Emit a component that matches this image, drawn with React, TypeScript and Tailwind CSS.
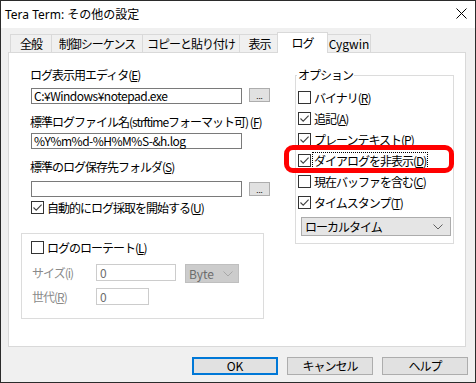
import React from "react";

const Check = ({ checked }: { checked?: boolean }) => (
  <span className="w-[13px] h-[13px] border border-[#333333] bg-white flex items-center justify-center shrink-0">
    {checked && (
      <svg width="11" height="11" viewBox="0 0 11 11">
        <path d="M1.5 5.5 L4.2 8.2 L9.6 2.6" fill="none" stroke="#404040" strokeWidth="1.1" />
      </svg>
    )}
  </span>
);

const Chevron = ({ color }: { color: string }) => (
  <svg width="10" height="6" viewBox="0 0 10 6">
    <path d="M0.5 0.5 L5 5 L9.5 0.5" fill="none" stroke={color} strokeWidth="1" />
  </svg>
);

const Dots = () => (
  <div className="ml-[7px] w-[21px] h-[14px] bg-[#e1e1e1] border border-[#adadad] flex items-end justify-center text-[8px] leading-[10px] tracking-normal">
    ...
  </div>
);

const Option = ({ checked, children, focus }: { checked?: boolean; children: React.ReactNode; focus?: boolean }) => (
  <div className="h-[21px] flex items-center ml-[2px] gap-[2px]">
    <Check checked={checked} />
    <span className={focus ? "outline-1 outline-dotted outline-[#000] px-[1px] leading-[15px]" : "px-[1px] leading-[15px]"}>{children}</span>
  </div>
);

export default function App() {
  return (
    <div className="w-[476px] h-[383px] border border-[#2b2b2b] bg-[#f0f0f0] flex flex-col text-[12px] tracking-[-1px] text-black font-['Noto_Sans_CJK_JP',sans-serif]">
      {/* タイトルバー */}
      <div className="h-[27px] bg-white flex items-center justify-between shrink-0">
        <span className="pl-[4px] tracking-normal font-['Noto_Sans','Noto_Sans_CJK_JP',sans-serif]">Tera Term: その他の設定</span>
        <svg width="11" height="11" viewBox="0 0 11 11" className="mr-[8px] -mt-[2px]">
          <path d="M0.5 0.5 L10.5 10.5 M10.5 0.5 L0.5 10.5" stroke="#000" strokeWidth="1" />
        </svg>
      </div>

      {/* タブ */}
      <div className="mt-[4px] h-[20px] flex items-end pl-[9px]">
        <div className="w-[42px] h-[18px] border border-b-0 border-[#d9d9d9] flex items-center justify-center">全般</div>
        <div className="-ml-px w-[92px] h-[18px] border border-b-0 border-[#d9d9d9] flex items-center justify-center">制御シーケンス</div>
        <div className="-ml-px w-[98px] h-[18px] border border-b-0 border-[#d9d9d9] flex items-center justify-center">コピーと貼り付け</div>
        <div className="-ml-px w-[41px] h-[18px] border border-b-0 border-[#d9d9d9] flex items-center justify-center">表示</div>
        <div className="-ml-[3px] w-[51px] h-[21px] -mb-px relative z-10 bg-white border border-b-0 border-[#d9d9d9] flex items-start justify-center pt-[1px]">ログ</div>
        <div className="-ml-[3px] w-[46px] h-[18px] border border-b-0 border-[#d9d9d9] flex items-center justify-center pl-[2px] tracking-normal">Cygwin</div>
      </div>

      {/* パネル */}
      <div className="relative ml-[7px] w-[458px] h-[295px] bg-white border border-[#d9d9d9] flex pl-[12px]">
        <div className="flex flex-col w-[249px]">
          <div className="ml-[9px] mt-[14px] h-[15px] leading-[15px]">ログ表示用エディタ(<u>E</u>)</div>
          <div className="flex items-start ml-[10px] mt-[6px]">
            <div className="w-[211px] h-[16px] border border-[#7a7a7a] bg-white pl-[2px] leading-[14px] tracking-[-0.5px]">C:¥Windows¥notepad.exe</div>
            <Dots />
          </div>
          <div className="ml-[9px] mt-[10px] h-[15px] leading-[15px] whitespace-nowrap">標準ログファイル名(strftimeフォーマット可) (<u>F</u>)</div>
          <div className="ml-[10px] mt-[4px] w-[211px] h-[16px] border border-[#7a7a7a] bg-white pl-[2px] leading-[14px] tracking-[-0.5px]">%Y%m%d-%H%M%S-&amp;h.log</div>
          <div className="ml-[9px] mt-[10px] h-[15px] leading-[15px]">標準のログ保存先フォルダ(<u>S</u>)</div>
          <div className="flex items-start ml-[10px] mt-[7px]">
            <div className="w-[211px] h-[16px] border border-[#7a7a7a] bg-white" />
            <div className="mt-px flex">
              <Dots />
            </div>
          </div>
          <div className="ml-[10px] mt-[4px] flex items-center gap-[3px] h-[13px]">
            <Check checked />
            <span className="leading-[15px]">自動的にログ採取を開始する(<u>U</u>)</span>
          </div>

          {/* ローテート */}
          <div className="mt-[19px] w-[243px] h-[86px] border border-[#dcdcdc] flex flex-col pl-[9px] pt-[7px]">
            <div className="flex items-center gap-[3px] h-[13px]">
              <Check />
              <span className="leading-[15px]">ログのローテート(<u>L</u>)</span>
            </div>
            <div className="flex items-start mt-[10px] text-[#8a8a8a]">
              <span className="w-[65px] h-[17px] leading-[17px] pl-[1px]">サイズ(i)</span>
              <div className="w-[80px] h-[17px] border border-[#cccccc] bg-white pl-[3px] leading-[15px] text-[#6d6d6d]">0</div>
              <div className="ml-[9px] w-[54px] h-[19px] border border-[#bfbfbf] bg-[#cccccc] flex items-center justify-between pl-[3px] pr-[5px] text-[#6d6d6d] tracking-normal">
                Byte
                <Chevron color="#a8a8a8" />
              </div>
            </div>
            <div className="flex items-start mt-[5px] text-[#8a8a8a]">
              <span className="w-[65px] h-[17px] leading-[17px] pl-[1px]">世代(<u>R</u>)</span>
              <div className="w-[53px] h-[17px] border border-[#cccccc] bg-white pl-[3px] leading-[15px] text-[#6d6d6d]">0</div>
            </div>
          </div>
        </div>

        {/* オプション */}
        <fieldset className="ml-[25px] mt-[15px] w-[159px] h-[176px] border border-[#dcdcdc] px-0 flex flex-col">
          <legend className="ml-px px-px leading-[14px]">オプション</legend>
          <div className="mt-[5px]" />
          <Option>バイナリ(<u>R</u>)</Option>
          <Option checked>追記(<u>A</u>)</Option>
          <Option checked>プレーンテキスト(<u>P</u>)</Option>
          <Option checked focus>ダイアログを非表示(<u>D</u>)</Option>
          <Option>現在バッファを含む(<u>C</u>)</Option>
          <Option checked>タイムスタンプ(<u>T</u>)</Option>
          <div className="mt-[4px] ml-[5px] w-[150px] h-[19px] bg-[#e5e5e5] border border-[#acacac] flex items-center justify-between pl-[3px] pr-[7px]">
            ローカルタイム
            <Chevron color="#606060" />
          </div>
        </fieldset>

        {/* 注目の赤枠 */}
        <div className="absolute left-[275px] top-[92px] w-[170px] h-[28px] border-[5px] border-[#ff0000] rounded-[9px]" />
      </div>

      {/* ボタン */}
      <div className="mt-[10px] flex justify-end gap-[9px] pr-[7px]">
        <div className="w-[86px] h-[18px] border-2 border-[#0078d7] bg-[#e1e1e1] flex items-center justify-center tracking-normal">OK</div>
        <div className="w-[86px] h-[18px] border border-[#adadad] bg-[#e1e1e1] flex items-center justify-center">キャンセル</div>
        <div className="w-[86px] h-[18px] border border-[#adadad] bg-[#e1e1e1] flex items-center justify-center">ヘルプ</div>
      </div>
    </div>
  );
}
